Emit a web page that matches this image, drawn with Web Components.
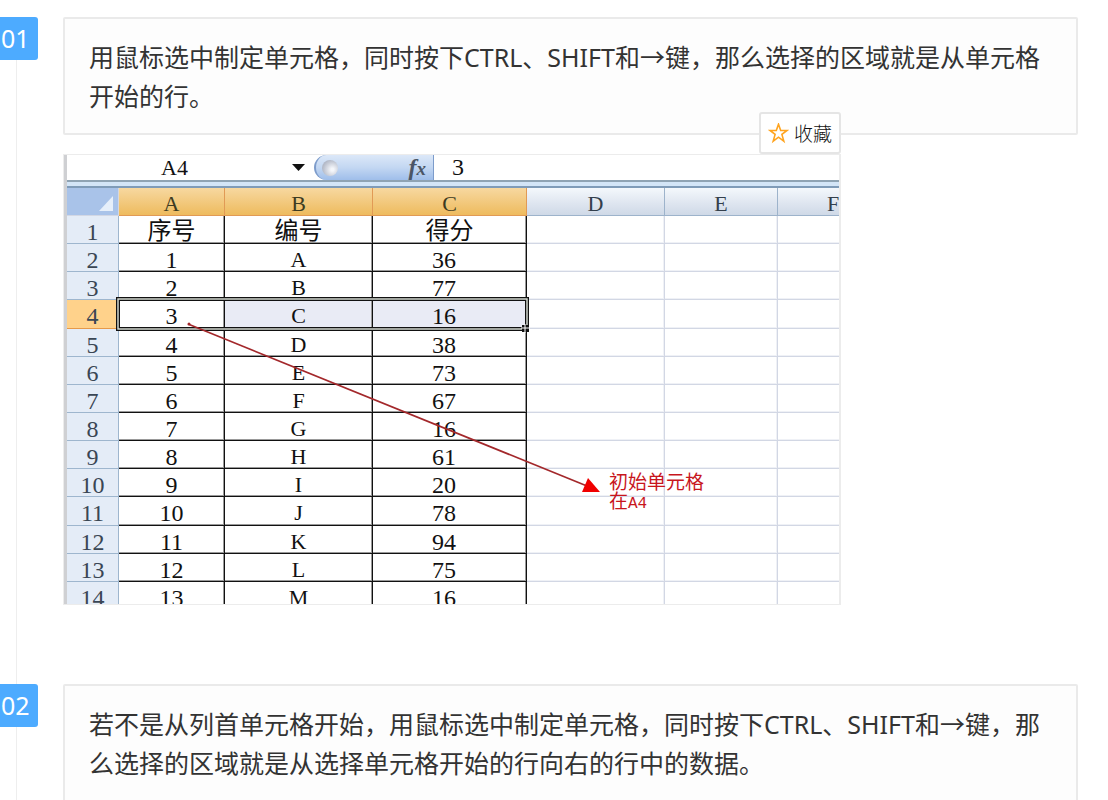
<!DOCTYPE html>
<html lang="zh-CN">
<head>
<meta charset="utf-8">
<title>Excel 选择整行</title>
<style>
html { scrollbar-width: none; }
body { margin: 0; background: #fff; color: #333; font-family: "Noto Sans", "Noto Sans CJK SC", sans-serif; }
</style>
</head>
<body>
<step-list>
  <step-item number="01">
    用鼠标选中制定单元格，同时按下CTRL、SHIFT和→键，那么选择的区域就是从单元格开始的行。
    <sheet-figure slot="figure">
      <favorite-button slot="action">收藏</favorite-button>
      <span slot="note">初始单元格<br>在<span style="font-family:'Liberation Mono',monospace;font-size:16px">A4</span></span>
    </sheet-figure>
  </step-item>
  <step-item number="02">
    若不是从列首单元格开始，用鼠标选中制定单元格，同时按下CTRL、SHIFT和→键，那么选择的区域就是从选择单元格开始的行向右的行中的数据。
  </step-item>
</step-list>

<template id="step-list">
  <style>
    :host { display: block; padding: 17px 30px 0 0; }
  </style>
  <slot></slot>
</template>

<template id="step-item">
  <style>
    :host { display: grid; grid-template-columns: 38px minmax(0, 1fr); column-gap: 25px; }
    .rail { display: flex; flex-direction: column; }
    .badge { height: 43px; line-height: 43px; box-sizing: border-box; padding-left: 1px; background: #4dabff; color: #fff; font-size: 25px; border-radius: 0 3px 3px 0; }
    .line { flex: 1; width: 1px; margin-left: 16px; background: #eee; }
    .text { margin: 0; padding: 19px 24px 17px; border: 2px solid #eaeaea; border-radius: 2px; background: #fdfdfd; font-size: 25px; line-height: 39px; }
    .media { display: block; }
  </style>
  <div class="rail"><div class="badge"></div><div class="line"></div></div>
  <div class="body">
    <p class="text"><slot></slot></p>
    <slot name="figure" class="media"></slot>
  </div>
</template>

<template id="favorite-button">
  <style>
    :host { display: block; }
    button { display: flex; align-items: center; gap: 5px; box-sizing: border-box; height: 42px; padding: 0 7px; border: 2px solid #e5e5e5; border-radius: 3px; background: #fff; color: #111; font: 19px/24px "Noto Sans CJK SC", sans-serif; font-weight: 300; white-space: nowrap; }
    svg { width: 21px; height: 21px; flex: none; }
  </style>
  <button type="button">
    <svg viewBox="0 0 21 21" fill="none" stroke="#ffa41f" stroke-width="1.6" stroke-linejoin="miter" aria-hidden="true"><path d="M10.5 1.2 12.7 7.5H19L13.9 11.4 15.8 18.1 10.5 14.2 5.2 18.1 7.1 11.4 2 7.5H8.3Z"/></svg>
    <span><slot></slot></span>
  </button>
</template>

<template id="sheet-figure">
  <style>
    :host { display: block; position: relative; max-width: 778px; margin: 19px 0 79px; }
    figure { margin: 0; height: 449px; overflow: hidden; border: solid #ececec; border-width: 1px 2px 1px 1px; font-family: "Liberation Serif", "Noto Sans CJK SC", serif; font-size: 24px; color: #111; }
    .sheet { border-left: 3px solid #cfd0d3; }
    .bar { display: flex; height: 25px; align-items: stretch; border-bottom: 2px solid #8fa3b3; background: #fff; }
    input { border: 0; padding: 0; margin: 0; background: transparent; font: inherit; color: inherit; min-width: 0; }
    .name { width: 215px; text-align: center; font-size: 22px; }
    .drop { border: 0; padding: 0; width: 32px; background: none; display: grid; place-items: center; }
    .pill { box-sizing: border-box; display: flex; align-items: center; justify-content: space-between; width: 120px; padding: 0 7px 0 6px; border: solid #7d9ccb; border-width: 0 1px 0 2px; border-radius: 14px 0 0 14px; background: linear-gradient(#dce8f8, #c3d7f2 50%, #9fbeea); }
    .dot { width: 16px; height: 16px; border-radius: 8px; background: radial-gradient(circle at 65% 60%, #f4f6fa 10%, #b4bac8 70%); }
    .fx { font: italic bold 24px/24px "Liberation Serif", serif; color: #4b5666; }
    .fx small { font-size: 19px; }
    .value { flex: 1; padding-left: 18px; }
    .band { height: 4px; background: #d3e5f7; border-bottom: 2px solid #7f9bb8; }
    table { table-layout: fixed; width: 822px; height: 422px; border-collapse: separate; border-spacing: 0; }
    th, td { box-sizing: border-box; height: 28px; padding: 5px 0 0; font-weight: normal; line-height: 22px; text-align: center; border: solid #d2d7e4; border-width: 0 1px 1px 0; overflow: hidden; }
    td { box-shadow: inset -1px -1px #eff1f6; }
    thead th { font-size: 22px; color: #333f4c; background: linear-gradient(#f4f8fc, #dfe6f0 55%, #cfd9e7); border-color: #9db3cb; }
    thead th.on { color: #3d3b22; background: linear-gradient(#f7d8a0, #eebb5e); border-color: #e19a55; }
    thead .corner { padding: 0 5px 4px 0; background: #a9c3e9; text-align: right; vertical-align: bottom; line-height: 0; box-shadow: none; }
    tbody th { color: #3a4654; background: #e4ecf7; border-color: #9eb6ce; }
    tbody .active th { background: #ffd28b; border-color: #e79a4a; }
    td.data { border-color: #111; box-shadow: inset -1px -1px #999; }
    td.letter { font-size: 22px; }
    td.score { padding-right: 11px; }
    td.label { padding: 3px 0 0; line-height: 24px; }
    .active td.picked { background: #e9ebf5; }
    .overlay { position: absolute; left: 0; top: 0; width: 778px; height: 451px; }
    .note { position: absolute; left: 546px; top: 317px; font: 19px/19px "Noto Sans CJK SC", sans-serif; color: #c8161d; white-space: nowrap; }
    .action { position: absolute; right: 0; bottom: 100%; }
  </style>
  <figure>
    <div class="sheet">
      <div class="bar">
        <input class="name" value="A4" aria-label="名称框" readonly>
        <button class="drop" type="button" aria-label="展开名称框"><svg width="13" height="7" viewBox="0 0 13 7"><path d="M0 0H13L6.5 7Z" fill="#111"/></svg></button>
        <div class="pill"><span class="dot"></span><span class="fx">f<small>x</small></span></div>
        <input class="value" value="3" aria-label="编辑栏" readonly>
      </div>
      <div class="band"></div>
      <table>
        <colgroup><col style="width:52px"><col style="width:106px"><col style="width:148px"><col style="width:154px"><col style="width:138px"><col style="width:113px"><col style="width:111px"></colgroup>
        <thead></thead>
        <tbody></tbody>
      </table>
    </div>
  </figure>
  <svg class="overlay" viewBox="0 0 778 451" aria-hidden="true">
    <rect x="55" y="145" width="409" height="30" fill="none" stroke="#111" stroke-width="4"/>
    <rect x="55" y="145" width="409" height="30" fill="none" stroke="#dfe4dc" stroke-width="1.4"/>
    <path d="M459 171h7v7h-7Z" fill="#111"/><path d="M462 170v9M458 174h9" stroke="#fff"/>
    <path d="M125 170 524 332" stroke="#a3282b" stroke-width="1.7"/>
    <circle cx="126" cy="170" r="1.5" fill="#a3282b"/>
    <path d="M525 324 537 338 519 338Z" fill="#f00000"/>
  </svg>
  <div class="note"><slot name="note"></slot></div>
  <div class="action"><slot name="action"></slot></div>
</template>

<script>
class TemplateElement extends HTMLElement {
  constructor() {
    super();
    const template = document.getElementById(this.localName);
    this.attachShadow({ mode: "open" }).append(template.content.cloneNode(true));
  }
}

class StepList extends TemplateElement {}
class FavoriteButton extends TemplateElement {}

class StepItem extends TemplateElement {
  connectedCallback() {
    this.shadowRoot.querySelector(".badge").textContent = this.getAttribute("number");
  }
}

class SheetFigure extends TemplateElement {
  connectedCallback() {
    const scores = [36, 77, 16, 38, 73, 67, 16, 61, 20, 78, 94, 75, 16];
    const columns = ["A", "B", "C", "D", "E", "F"];
    const head = columns.map((c, i) => `<th scope="col" class="${i < 3 ? "on" : ""}">${c}</th>`).join("");
    this.shadowRoot.querySelector("thead").innerHTML =
      `<tr><td class="corner"><svg width="14" height="15" viewBox="0 0 14 15"><path d="M14 0V15H0Z" fill="#e6effa"/></svg></td>${head}</tr>`;
    const blank = "<td></td><td></td><td></td>";
    const rows = [`<tr><th scope="row">1</th>${["序号", "编号", "得分"].map(t => `<td class="data label">${t}</td>`).join("")}${blank}</tr>`];
    scores.forEach((score, i) => {
      rows.push(`<tr class="${i === 2 ? "active" : ""}"><th scope="row">${i + 2}</th><td class="data">${i + 1}</td>` +
        `<td class="data letter picked">${String.fromCharCode(65 + i)}</td><td class="data picked score">${score}</td>${blank}</tr>`);
    });
    this.shadowRoot.querySelector("tbody").innerHTML = rows.join("");
  }
}

customElements.define("step-list", StepList);
customElements.define("step-item", StepItem);
customElements.define("favorite-button", FavoriteButton);
customElements.define("sheet-figure", SheetFigure);
</script>
</body>
</html>
